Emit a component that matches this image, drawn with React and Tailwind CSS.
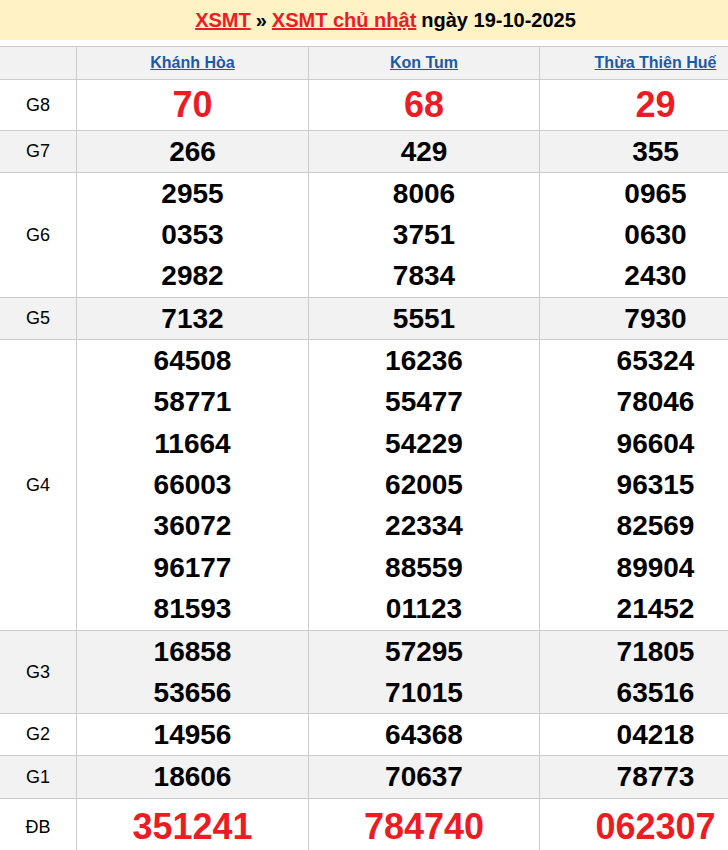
const provinces = ['Khánh Hòa', 'Kon Tum', 'Thừa Thiên Huế']

const rows = [
  { label: 'G8', h: 'h-[50px]', big: true, bg: 'bg-white', data: [['70'], ['68'], ['29']] },
  { label: 'G7', h: 'h-[41px]', bg: 'bg-[#f2f2f2]', data: [['266'], ['429'], ['355']] },
  {
    label: 'G6',
    h: 'h-[124px]',
    bg: 'bg-white',
    data: [
      ['2955', '0353', '2982'],
      ['8006', '3751', '7834'],
      ['0965', '0630', '2430'],
    ],
  },
  { label: 'G5', h: 'h-[41px]', bg: 'bg-[#f2f2f2]', data: [['7132'], ['5551'], ['7930']] },
  {
    label: 'G4',
    h: 'h-[290px]',
    bg: 'bg-white',
    data: [
      ['64508', '58771', '11664', '66003', '36072', '96177', '81593'],
      ['16236', '55477', '54229', '62005', '22334', '88559', '01123'],
      ['65324', '78046', '96604', '96315', '82569', '89904', '21452'],
    ],
  },
  {
    label: 'G3',
    h: 'h-[82px]',
    bg: 'bg-[#f2f2f2]',
    data: [
      ['16858', '53656'],
      ['57295', '71015'],
      ['71805', '63516'],
    ],
  },
  { label: 'G2', h: 'h-[41px]', bg: 'bg-white', data: [['14956'], ['64368'], ['04218']] },
  { label: 'G1', h: 'h-[42px]', bg: 'bg-[#f2f2f2]', data: [['18606'], ['70637'], ['78773']] },
  { label: 'ĐB', h: 'h-[56px]', big: true, bg: 'bg-white', data: [['351241'], ['784740'], ['062307']] },
]

function Row({ row }) {
  return (
    <div className={`grid grid-cols-[76px_232px_231px_232px] border-b border-[#cccccc] ${row.bg}`}>
      <div className={`${row.h} flex items-center justify-center text-[18px] text-black`}>{row.label}</div>
      {row.data.map((nums, i) => (
        <div key={i} className={`${row.h} border-l border-[#cccccc] flex flex-col justify-around items-center`}>
          {nums.map((n) => (
            <div
              key={n}
              className={
                row.big
                  ? 'text-[36px] font-bold text-[#ed1c24] leading-none'
                  : 'text-[28px] font-bold text-black leading-none'
              }
            >
              {n}
            </div>
          ))}
        </div>
      ))}
    </div>
  )
}

export default function App() {
  return (
    <div className="w-[728px] h-[850px] overflow-hidden bg-white font-['Liberation_Sans',Arial,sans-serif]">
      <div className="w-[771px]">
        <div className="h-[40px] bg-[#fff2c4] flex items-center justify-center text-[20px] font-bold text-black">
          <a href="#" className="text-[#ed1c24] underline">XSMT</a>
          <span className="mx-[5px]">»</span>
          <a href="#" className="text-[#ed1c24] underline">XSMT chủ nhật</a>
          <span className="ml-[5px]">ngày 19-10-2025</span>
        </div>
        <div className="mt-[6px] border-t border-[#cccccc]">
          <div className="grid grid-cols-[76px_232px_231px_232px] border-b border-[#cccccc] bg-[#f2f2f2]">
            <div className="h-[32px]" />
            {provinces.map((p) => (
              <div key={p} className="h-[32px] border-l border-[#cccccc] flex items-center justify-center">
                <a href="#" className="text-[16px] font-bold text-[#1a5aab] underline">{p}</a>
              </div>
            ))}
          </div>
          {rows.map((r) => (
            <Row key={r.label} row={r} />
          ))}
        </div>
      </div>
    </div>
  )
}
